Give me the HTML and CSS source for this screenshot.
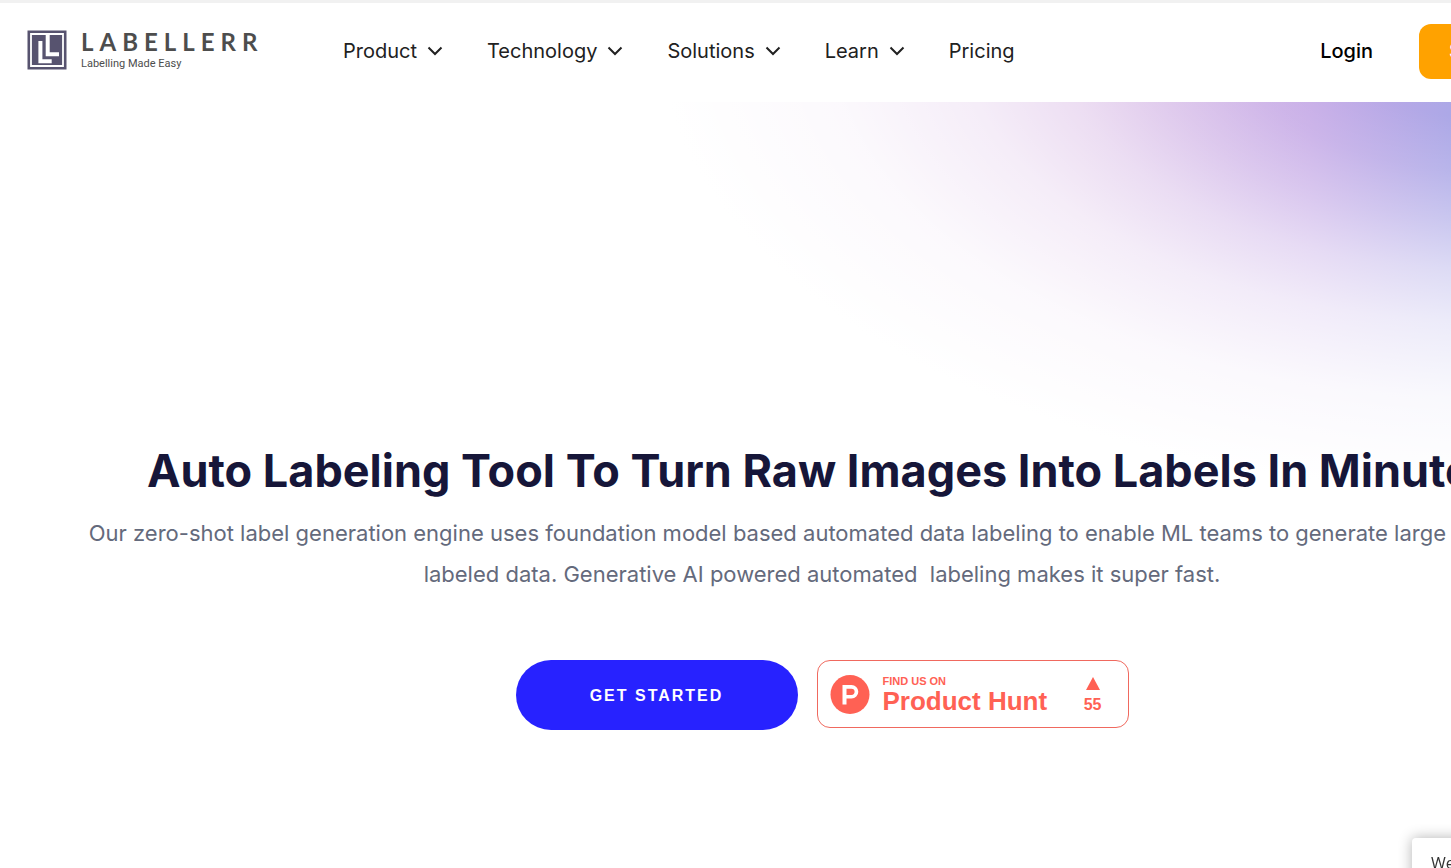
FILE: index.html
```html
<!DOCTYPE html>
<html lang="en">
<head>
    <meta charset="UTF-8">
    <meta name="viewport" content="width=device-width, initial-scale=1">
    <title>Labellerr</title>
    <link rel="stylesheet" href="styles.css">
</head>
<body>
    <div class="page">
        <header class="header">
            <a class="logo" href="#">
                <svg class="logo-mark" viewBox="0 0 40 40" aria-hidden="true">
                    <rect x="0.500" y="0.500" width="39" height="39" fill="#57536f"/>
                    <path d="M4 4H36V36H4Z" fill="none" stroke="#fff" stroke-width="1.800"/>
                    <path d="M13.400 11V31.200H24.700" fill="none" stroke="#fff" stroke-width="4"/>
                    <path d="M20.700 4V24.200H32" fill="none" stroke="#fff" stroke-width="4"/>
                </svg>
                <span class="logo-text">
                    <span class="logo-name">LABELLERR</span>
                    <span class="logo-tagline">Labelling Made Easy</span>
                </span>
            </a>
            <nav class="nav">
                <a class="nav-link" href="#">Product <svg class="chevron" viewBox="0 0 16 10"><path d="M1.500 1.500L8 8L14.500 1.500"/></svg></a>
                <a class="nav-link" href="#">Technology <svg class="chevron" viewBox="0 0 16 10"><path d="M1.500 1.500L8 8L14.500 1.500"/></svg></a>
                <a class="nav-link" href="#">Solutions <svg class="chevron" viewBox="0 0 16 10"><path d="M1.500 1.500L8 8L14.500 1.500"/></svg></a>
                <a class="nav-link" href="#">Learn <svg class="chevron" viewBox="0 0 16 10"><path d="M1.500 1.500L8 8L14.500 1.500"/></svg></a>
                <a class="nav-link" href="#">Pricing</a>
            </nav>
            <div class="actions">
                <a class="login" href="#">Login</a>
                <button class="signup" type="button">Start Free</button>
            </div>
        </header>

        <main class="hero">
            <h1 class="hero-title">Auto Labeling Tool To Turn Raw Images Into Labels In Minutes</h1>
            <p class="hero-text">Our zero-shot label generation engine uses foundation model based automated data labeling to enable ML teams to generate large volume of<br>labeled data. Generative AI powered automated&nbsp; labeling makes it super fast.</p>
            <div class="hero-buttons">
                <button class="get-started" type="button">GET STARTED</button>
                <a class="badge" href="#">
                    <svg class="badge-icon" viewBox="0 0 40 40" aria-hidden="true">
                        <circle cx="20" cy="19.500" r="19.500" fill="#ff6154"/>
                        <path fill="#fff" fill-rule="evenodd" d="M12.500 10H21.500A6.800 6.800 0 0 1 21.500 23.600H16.500V29.500H12.500ZM16.500 13.700V19.900H21.500A3.100 3.100 0 0 0 21.500 13.700Z"/>
                    </svg>
                    <span class="badge-text">
                        <span class="badge-small">FIND US ON</span>
                        <span class="badge-name">Product Hunt</span>
                    </span>
                    <span class="badge-votes">
                        <svg class="badge-arrow" viewBox="0 0 14 13" aria-hidden="true"><path d="M7 0L14 13H0Z" fill="#ff6154"/></svg>
                        <span>55</span>
                    </span>
                </a>
            </div>
        </main>
    </div>

    <div class="chat">We</div>
</body>
</html>
```
FILE: styles.css
```css
* {
    box-sizing: border-box;
}
body {
    margin: 0;
    min-height: 100vh;
    background: #fff;
    font-family: Inter, "Liberation Sans", sans-serif;
    overflow: hidden;
}
a {
    color: inherit;
    text-decoration: none;
}
button {
    border: none;
    cursor: pointer;
}
/* the layout has a desktop minimum, wider than small windows */
.page {
    min-width: 1644px;
}

/* header */
.header {
    display: flex;
    align-items: center;
    height: 102px;
    padding: 0 40px 3px 27px;
    border-top: 3px solid #f1f1f1;
}
.logo {
    display: flex;
    align-items: center;
    gap: 14px;
    width: 316px;
    padding-bottom: 2px;
}
.logo-mark {
    width: 40px;
    height: 40px;
}
.logo-text {
    display: flex;
    flex-direction: column;
    padding-top: 2px;
    color: #4d4d4d;
    font-family: Lato, sans-serif;
}
.logo-name {
    font-size: 24px;
    line-height: 26px;
    font-weight: 700;
    letter-spacing: 6px;
}
.logo-tagline {
    font-family: Roboto, sans-serif;
    font-size: 11px;
    line-height: 18px;
}
.nav {
    display: flex;
    gap: 44px;
}
.nav-link {
    display: flex;
    align-items: center;
    gap: 10px;
    color: #212121;
    font-size: 20px;
    line-height: 28px;
}
.chevron {
    width: 16px;
    height: 10px;
    fill: none;
    stroke: #212121;
    stroke-width: 2;
}
.actions {
    display: flex;
    align-items: center;
    gap: 46px;
    margin-left: auto;
}
.login {
    color: #000;
    font-size: 20px;
    font-weight: 500;
}
.signup {
    width: 185px;
    height: 55px;
    padding: 0 30px;
    border-radius: 12px;
    background: #ffa200;
    color: #fff;
    font-family: inherit;
    font-size: 20px;
    font-weight: 500;
    text-align: left;
    white-space: nowrap;
}

/* hero */
.hero {
    min-height: 766px;
    padding-top: 340px;
    text-align: center;
    background:
        radial-gradient(800px 440px at 1490px -70px,
            rgba(255, 255, 255, 0) 0%,
            rgba(255, 255, 255, .04) 20%,
            rgba(255, 255, 255, .18) 32%,
            rgba(255, 255, 255, .38) 43%,
            rgba(255, 255, 255, .6) 54%,
            rgba(255, 255, 255, .78) 66%,
            rgba(255, 255, 255, .93) 83%,
            #fff 104%),
        linear-gradient(to right, #d2ade0 1080px, #c2a5e5 1310px, #a8a5e6 1460px);
}
.hero-title {
    margin: 0;
    color: #161639;
    font-size: 45px;
    line-height: 58px;
    font-weight: 700;
}
.hero-text {
    margin: 13px 0 0;
    color: #646a7c;
    font-size: 22px;
    line-height: 41px;
}
.hero-buttons {
    display: flex;
    justify-content: center;
    gap: 19px;
    margin-top: 65px;
}
.get-started {
    width: 282px;
    height: 70px;
    padding-top: 3px;
    border-radius: 35px;
    background: #2722ff;
    color: #fff;
    font-family: "Liberation Sans", Arial, sans-serif;
    font-size: 16px;
    font-weight: 700;
    letter-spacing: 2px;
}
.badge {
    display: flex;
    align-items: center;
    width: 312px;
    height: 68px;
    padding: 2px 26px 0 12px;
    border: 1px solid #f0695e;
    border-radius: 13px;
    background: #fff;
    color: #ff6154;
    font-family: "Liberation Sans", Arial, sans-serif;
    font-weight: 700;
}
.badge-icon {
    width: 40px;
    height: 40px;
    margin-right: 13px;
}
.badge-text {
    display: flex;
    flex-direction: column;
    text-align: left;
}
.badge-small {
    font-size: 11px;
    line-height: 12px;
}
.badge-name {
    font-size: 26px;
    line-height: 28px;
}
.badge-votes {
    display: flex;
    flex-direction: column;
    align-items: center;
    gap: 6px;
    margin-left: auto;
    font-size: 16px;
    line-height: 18px;
}
.badge-arrow {
    width: 14px;
    height: 13px;
}

/* chat bubble in the corner */
.chat {
    position: fixed;
    right: -161px;
    bottom: -30px;
    width: 200px;
    height: 60px;
    padding: 14px 19px;
    border-radius: 4px;
    background: #fff;
    box-shadow: 0 0 14px rgba(0, 0, 0, .3);
    color: #333;
    font-family: "Open Sans", sans-serif;
    font-size: 16px;
    line-height: 22px;
}
```
